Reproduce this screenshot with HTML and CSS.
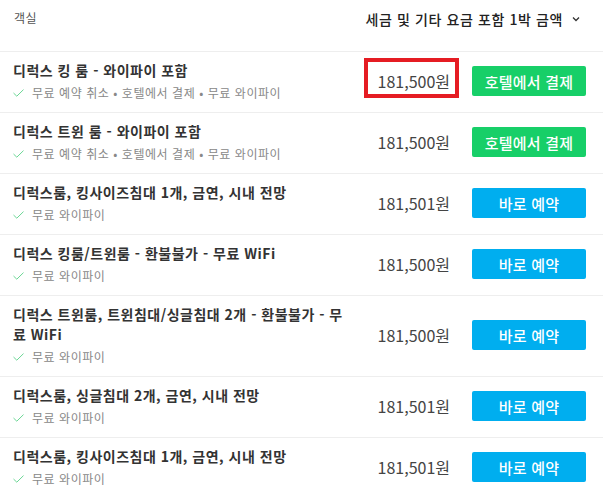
FILE: index.html
```html
<!DOCTYPE html>
<html lang="ko">
<head>
<meta charset="utf-8">
<link rel="stylesheet" href="styles.css">
</head>
<body>
<div class="table">
  <div class="head">
    <div class="head-room">객실</div>
    <div class="head-price">세금 및 기타 요금 포함 1박 금액
      <svg class="chev" width="8" height="6" viewBox="0 0 8 6"><path d="M1 1.5 L4 4.5 L7 1.5" fill="none" stroke="#333" stroke-width="1.3"/></svg>
    </div>
  </div>

  <div class="row">
    <div class="info">
      <div class="title">디럭스 킹 룸 - 와이파이 포함</div>
      <div class="sub"><svg class="check" width="11" height="8" viewBox="0 0 11 8"><path d="M0.5 4 L3.8 7.2 L10.5 0.6" fill="none" stroke="#6ad694" stroke-width="1"/></svg>무료 예약 취소 • 호텔에서 결제 • 무료 와이파이</div>
    </div>
    <div class="price"><span class="amount marked">181,500원</span></div>
    <button class="btn green">호텔에서 결제</button>
  </div>

  <div class="row">
    <div class="info">
      <div class="title">디럭스 트윈 룸 - 와이파이 포함</div>
      <div class="sub"><svg class="check" width="11" height="8" viewBox="0 0 11 8"><path d="M0.5 4 L3.8 7.2 L10.5 0.6" fill="none" stroke="#6ad694" stroke-width="1"/></svg>무료 예약 취소 • 호텔에서 결제 • 무료 와이파이</div>
    </div>
    <div class="price"><span class="amount">181,500원</span></div>
    <button class="btn green">호텔에서 결제</button>
  </div>

  <div class="row">
    <div class="info">
      <div class="title">디럭스룸, 킹사이즈침대 1개, 금연, 시내 전망</div>
      <div class="sub"><svg class="check" width="11" height="8" viewBox="0 0 11 8"><path d="M0.5 4 L3.8 7.2 L10.5 0.6" fill="none" stroke="#6ad694" stroke-width="1"/></svg>무료 와이파이</div>
    </div>
    <div class="price"><span class="amount">181,501원</span></div>
    <button class="btn blue">바로 예약</button>
  </div>

  <div class="row">
    <div class="info">
      <div class="title">디럭스 킹룸/트윈룸 - 환불불가 - 무료 WiFi</div>
      <div class="sub"><svg class="check" width="11" height="8" viewBox="0 0 11 8"><path d="M0.5 4 L3.8 7.2 L10.5 0.6" fill="none" stroke="#6ad694" stroke-width="1"/></svg>무료 와이파이</div>
    </div>
    <div class="price"><span class="amount">181,500원</span></div>
    <button class="btn blue">바로 예약</button>
  </div>

  <div class="row">
    <div class="info">
      <div class="title">디럭스 트윈룸, 트윈침대/싱글침대 2개 - 환불불가 - 무료 WiFi</div>
      <div class="sub"><svg class="check" width="11" height="8" viewBox="0 0 11 8"><path d="M0.5 4 L3.8 7.2 L10.5 0.6" fill="none" stroke="#6ad694" stroke-width="1"/></svg>무료 와이파이</div>
    </div>
    <div class="price"><span class="amount">181,500원</span></div>
    <button class="btn blue">바로 예약</button>
  </div>

  <div class="row">
    <div class="info">
      <div class="title">디럭스룸, 싱글침대 2개, 금연, 시내 전망</div>
      <div class="sub"><svg class="check" width="11" height="8" viewBox="0 0 11 8"><path d="M0.5 4 L3.8 7.2 L10.5 0.6" fill="none" stroke="#6ad694" stroke-width="1"/></svg>무료 와이파이</div>
    </div>
    <div class="price"><span class="amount">181,501원</span></div>
    <button class="btn blue">바로 예약</button>
  </div>

  <div class="row">
    <div class="info">
      <div class="title">디럭스룸, 킹사이즈침대 1개, 금연, 시내 전망</div>
      <div class="sub"><svg class="check" width="11" height="8" viewBox="0 0 11 8"><path d="M0.5 4 L3.8 7.2 L10.5 0.6" fill="none" stroke="#6ad694" stroke-width="1"/></svg>무료 와이파이</div>
    </div>
    <div class="price"><span class="amount">181,501원</span></div>
    <button class="btn blue">바로 예약</button>
  </div>
</div>
</body>
</html>
```

FILE: styles.css
```css
* { box-sizing: border-box; }
html, body { margin: 0; padding: 0; background: #fff; }
body {
  font-family: "Noto Sans CJK KR", "Noto Sans", sans-serif;
  color: #333;
  overflow: hidden;
}
.table { width: 603px; }
.head {
  height: 52px;
  border-bottom: 1px solid #eeeeee;
  display: flex;
  justify-content: space-between;
  align-items: flex-start;
  padding: 9px 23px 0 14px;
}
.head-room { font-size: 12px; line-height: 18px; color: #555; letter-spacing: 0.5px; }
.head-price {
  font-size: 14px;
  line-height: 20px;
  color: #222;
  font-weight: 500;
  letter-spacing: 0.6px;
  display: flex;
  align-items: center;
  gap: 9px;
}
.chev { display: block; }
.row {
  display: flex;
  align-items: center;
  border-bottom: 1px solid #eeeeee;
  padding: 8px 17px 10px 13px;
}
.info { width: 340px; }
.title {
  font-size: 14px;
  line-height: 20px;
  font-weight: 700;
  color: #333;
  letter-spacing: 0.5px;
  word-break: break-all;
}
.sub {
  margin-top: 4px;
  font-size: 12px;
  line-height: 18px;
  color: #888;
  letter-spacing: 0.55px;
  display: flex;
  align-items: center;
}
.check { margin-right: 8px; flex: none; }
.price { flex: 1; text-align: right; }
.amount {
  position: relative;
  font-size: 16px;
  line-height: 22px;
  color: #444;
}
.marked::after {
  content: "";
  position: absolute;
  left: -14px;
  right: -9px;
  top: -11px;
  bottom: -5px;
  border: 4px solid #e51c23;
}
.btn {
  margin-left: 22px;
  width: 114px;
  height: 30px;
  border: none;
  border-radius: 2px;
  color: #fff;
  font-family: "Noto Sans CJK KR", "Noto Sans", sans-serif;
  font-size: 15px;
  font-weight: 500;
  letter-spacing: 0.2px;
  padding: 0;
  flex: none;
}
.green { background: #17cf68; }
.blue { background: #00aeef; }
```
